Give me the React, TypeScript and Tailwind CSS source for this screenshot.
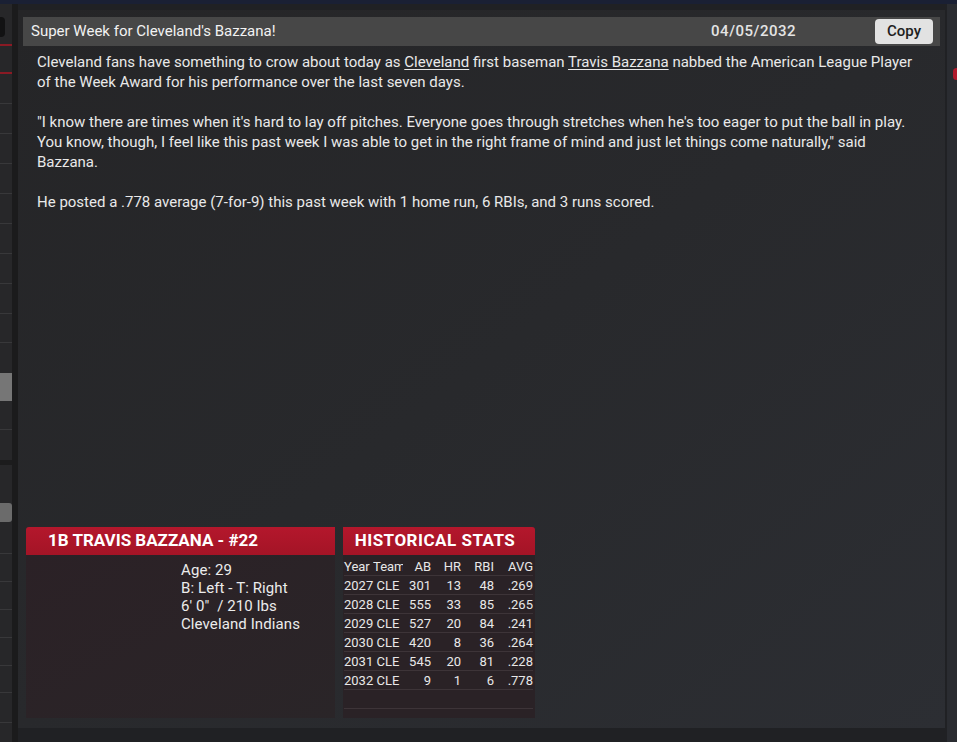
import React from "react";

const font = "font-['Roboto','Liberation_Sans',sans-serif]";

// left edge of the window: a narrow, cut-off list
const sideRows: { h: number; cls: string }[] = [
  { h: 13, cls: "" },
  { h: 20, cls: "w-[5px] rounded-r-[4px] bg-[#121213]" },
  { h: 7, cls: "" },
  { h: 2, cls: "bg-[#8a1a24]" },
  { h: 26, cls: "" },
  { h: 2, cls: "bg-[#8a1a24]" },
  { h: 30, cls: "border-b border-[#38383a]" },
  { h: 30, cls: "border-b border-[#38383a]" },
  { h: 30, cls: "border-b border-[#38383a]" },
  { h: 30, cls: "border-b border-[#38383a]" },
  { h: 30, cls: "border-b border-[#38383a]" },
  { h: 30, cls: "border-b border-[#38383a]" },
  { h: 30, cls: "border-b border-[#38383a]" },
  { h: 30, cls: "border-b border-[#38383a]" },
  { h: 29, cls: "border-b border-[#38383a]" },
  { h: 30, cls: "" },
  { h: 28, cls: "bg-[#767676]" },
  { h: 29, cls: "border-b border-[#38383a]" },
  { h: 30, cls: "" },
  { h: 5, cls: "bg-[#1c1c1d]" },
  { h: 38, cls: "" },
  { h: 19, cls: "rounded-r-[3px] bg-[#6b6b6b]" },
  { h: 32, cls: "border-b border-[#38383a]" },
  { h: 28, cls: "border-b border-[#38383a]" },
  { h: 28, cls: "border-b border-[#38383a]" },
  { h: 28, cls: "border-b border-[#38383a]" },
  { h: 28, cls: "border-b border-[#38383a]" },
  { h: 27, cls: "border-b border-[#38383a]" },
  { h: 30, cls: "border-b border-[#38383a]" },
];

const stats = [
  ["2027", "CLE", "301", "13", "48", ".269"],
  ["2028", "CLE", "555", "33", "85", ".265"],
  ["2029", "CLE", "527", "20", "84", ".241"],
  ["2030", "CLE", "420", "8", "36", ".264"],
  ["2031", "CLE", "545", "20", "81", ".228"],
  ["2032", "CLE", "9", "1", "6", ".778"],
];

const cols = "grid grid-cols-[29px_30px_28px_30px_33px_39px]";

function Sidebar() {
  return (
    <div className="flex w-[12px] flex-col bg-[#272729]">
      {sideRows.map((row, i) => (
        <div key={i} style={{ height: row.h }} className={`shrink-0 ${row.cls}`} />
      ))}
    </div>
  );
}

function PlayerCard() {
  return (
    <div className="flex w-[309px] flex-col">
      <div className="flex h-[28px] items-center rounded-tl-[3px] bg-gradient-to-b from-[#b4172c] to-[#a41426] pl-[22px] text-[17px] font-bold text-white">
        1B TRAVIS BAZZANA - #22
      </div>
      <div className="flex-1 bg-gradient-to-br from-[#2b2126] to-[#2a2528] pl-[155px] pt-[6px] text-[15px] leading-[18px] tracking-[0.1px] text-[#ececec]">
        <div>Age: 29</div>
        <div>B: Left - T: Right</div>
        <div>6' 0"&nbsp; / 210 lbs</div>
        <div>Cleveland Indians</div>
      </div>
    </div>
  );
}

function StatsTable() {
  return (
    <div className="flex w-[192px] flex-col">
      <div className="flex h-[28px] items-center justify-center rounded-tr-[3px] bg-gradient-to-b from-[#b4172c] to-[#a41426] pr-[8px] text-[17px] font-bold tracking-[0.5px] text-white">
        HISTORICAL STATS
      </div>
      <div className="flex-1 bg-[#2a2226] pl-[1px] pr-[2px] pt-[2px] text-[13px] text-[#e8e8e8]">
        <div className={`${cols} h-[19px] items-center border-b border-[#3d3438]`}>
          <span>Year</span>
          <span className="overflow-hidden whitespace-nowrap">Team</span>
          <span className="text-right">AB</span>
          <span className="text-right">HR</span>
          <span className="text-right">RBI</span>
          <span className="text-right">AVG</span>
        </div>
        {stats.map((row) => (
          <div
            key={row[0]}
            className={`${cols} h-[19px] items-center border-b border-[#3d3438]`}
          >
            <span>{row[0]}</span>
            <span className="text-center">{row[1]}</span>
            <span className="text-right">{row[2]}</span>
            <span className="text-right">{row[3]}</span>
            <span className="text-right">{row[4]}</span>
            <span className="text-right">{row[5]}</span>
          </div>
        ))}
        <div className="h-[19px] border-b border-[#3d3438]" />
      </div>
    </div>
  );
}

export default function App() {
  return (
    <div className={`flex h-[742px] w-[957px] flex-col overflow-hidden bg-[#202124] ${font}`}>
      <div className="h-[4px] bg-[#1a2034]" />
      <div className="flex flex-1">
        <Sidebar />
        <div className="w-[6px] bg-[#1b1b1c]" />
        <main className="mb-[14px] mt-[6px] flex w-[927px] flex-col bg-gradient-to-br from-[#252527] via-[#28292c] to-[#2c2e33] px-[5px] pt-[7px]">
          <div className="flex h-[29px] items-center bg-[#474747] text-[15px]">
            <span className="flex-1 pl-[8px] text-[#f2f2f2]">
              Super Week for Cleveland's Bazzana!
            </span>
            <span className="mr-[79px] font-medium tracking-[0.5px] text-[#e4e4e4]">
              04/05/2032
            </span>
            <button
              type="button"
              className="mr-[7px] h-[25px] w-[58px] rounded-[4px] bg-[#e2e2e2] text-[15px] font-medium text-[#1e1e1e]"
            >
              Copy
            </button>
          </div>

          <div className="mt-[6px] w-[905px] px-[14px] text-[15px] leading-[20px] text-[#e9e9e9]">
            <p className="mb-[20px]">
              Cleveland fans have something to crow about today as{" "}
              <span className="underline underline-offset-2">Cleveland</span> first
              baseman <span className="underline underline-offset-2">Travis Bazzana</span>{" "}
              nabbed the American League Player of the Week Award for his performance
              over the last seven days.
            </p>
            <p className="mb-[20px]">
              "I know there are times when it's hard to lay off pitches. Everyone goes
              through stretches when he's too eager to put the ball in play. You know,
              though, I feel like this past week I was able to get in the right frame of
              mind and just let things come naturally," said Bazzana.
            </p>
            <p>
              He posted a .778 average (7-for-9) this past week with 1 home run, 6 RBIs,
              and 3 runs scored.
            </p>
          </div>

          <div className="flex-1" />

          <div className="mb-[10px] ml-[3px] flex h-[191px] gap-[8px]">
            <PlayerCard />
            <StatsTable />
          </div>
        </main>
        <div className="relative ml-[2px] flex-1 bg-[#2a2c31]">
          <div className="absolute right-[-3px] top-[64px] h-[12px] w-[7px] rounded-full bg-[#b01a2c]" />
        </div>
      </div>
    </div>
  );
}
